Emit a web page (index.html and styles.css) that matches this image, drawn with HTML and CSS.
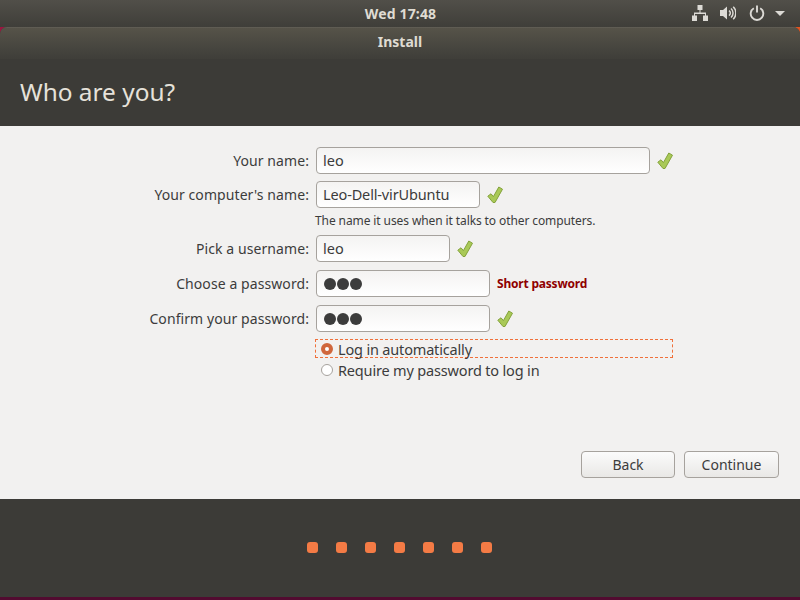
FILE: index.html
```html
<!DOCTYPE html>
<html lang="en">
<head>
<meta charset="utf-8">
<title>Install</title>
<link rel="stylesheet" href="styles.css">
</head>
<body>
<div class="screen">
  <header class="panel">
    <div class="clock">Wed 17:48</div>
    <div class="tray">
      <svg class="tray-icon net" viewBox="0 0 16 16" width="16" height="16"><path d="M5.500 0h5v5h-2v2.500h5.500v3h2V16h-5v-5.500h2V9H3v1.500h2V16H0v-5.500h2v-3h5.500V5h-2z" fill="#dcdad5"/></svg>
      <svg class="tray-icon vol" viewBox="0 0 16 16" width="16" height="16"><path d="M0 5h3l4-3.500v13L3 11H0z" fill="#dcdad5"/><path d="M9 5.500a3 3 0 0 1 0 5M11 3.500a6 6 0 0 1 0 9M13.200 1.800a8.500 8.500 0 0 1 0 12.400" fill="none" stroke="#dcdad5" stroke-width="1.500"/></svg>
      <svg class="tray-icon pow" viewBox="0 0 16 16" width="16" height="16"><path d="M4.800 3.200a6.300 6.300 0 1 0 6.400 0" fill="none" stroke="#dcdad5" stroke-width="1.900"/><path d="M8 .5v7" stroke="#dcdad5" stroke-width="1.900"/></svg>
      <span class="caret"></span>
    </div>
  </header>
  <main class="window">
    <div class="titlebar">Install</div>
    <div class="heading"><h1>Who are you?</h1></div>
    <div class="content">
      <form class="form">
        <div class="row row-first">
          <label class="label">Your name:</label>
          <div class="input w-name">leo</div>
          <svg class="check" viewBox="0 0 16 18" width="16" height="18"><use href="#tick"/></svg>
        </div>
        <div class="row row-computer">
          <label class="label">Your computer's name:</label>
          <div class="input w-computer">Leo-Dell-virUbuntu</div>
          <svg class="check" viewBox="0 0 16 18" width="16" height="18"><use href="#tick"/></svg>
        </div>
        <div class="hint">The name it uses when it talks to other computers.</div>
        <div class="row row-user">
          <label class="label">Pick a username:</label>
          <div class="input w-user">leo</div>
          <svg class="check" viewBox="0 0 16 18" width="16" height="18"><use href="#tick"/></svg>
        </div>
        <div class="row row-pass">
          <label class="label">Choose a password:</label>
          <div class="input w-pass dots"><i></i><i></i><i></i></div>
          <span class="short">Short password</span>
        </div>
        <div class="row row-pass">
          <label class="label">Confirm your password:</label>
          <div class="input w-pass dots"><i></i><i></i><i></i></div>
          <svg class="check" viewBox="0 0 16 18" width="16" height="18"><use href="#tick"/></svg>
        </div>
        <div class="radio-focus">
          <span class="radio on"></span><span>Log in automatically</span>
        </div>
        <div class="radio-row">
          <span class="radio"></span><span>Require my password to log in</span>
        </div>
      </form>
      <div class="actions">
        <button class="btn btn-back" type="button">Back</button>
        <button class="btn btn-cont" type="button">Continue</button>
      </div>
    </div>
    <div class="footer">
      <span class="dot"></span><span class="dot"></span><span class="dot"></span><span class="dot"></span><span class="dot"></span><span class="dot"></span><span class="dot"></span>
    </div>
  </main>
  <div class="desktop"></div>
</div>
<svg class="defs" width="0" height="0"><defs><symbol id="tick" viewBox="0 0 16 18"><path d="M.8 10.200 4 7.800l2.400 2.800L11.800 1l3.700 2.200L8 16.500H6z" fill="#a9c957" stroke="#84a23c" stroke-width="1" stroke-linejoin="round"/></symbol></defs></svg>
</body>
</html>
```
FILE: styles.css
```css
* { box-sizing: border-box; }
html, body { margin: 0; padding: 0; }
body { width: 800px; height: 600px; overflow: hidden; font-family: "Noto Sans", "Open Sans", sans-serif; font-size: 14px; color: #3c3c3c; }
.screen { width: 800px; height: 600px; display: flex; flex-direction: column; background: linear-gradient(90deg, #9b1540, #e2531f) no-repeat 0 27px / 100% 8px, #520b30; }
.panel { height: 27px; flex: none; position: relative; background: linear-gradient(#514f49, #3f3e39); display: flex; align-items: center; justify-content: center; }
.clock { color: #dfdbd2; font-size: 14px; font-weight: 700; letter-spacing: .15px; padding-left: 1px; }
.tray { position: absolute; right: 15px; top: 5px; display: flex; align-items: center; }
.tray-icon { display: block; }
.net { margin-right: 12px; }
.vol { margin-right: 13px; }
.pow { margin-right: 10px; }
.caret { width: 0; height: 0; border-left: 5px solid transparent; border-right: 5px solid transparent; border-top: 5px solid #dcdad5; }
.window { height: 570px; flex: none; display: flex; flex-direction: column; background: #3c3b37; border-radius: 7px 7px 0 0; overflow: hidden; }
.titlebar { height: 32px; flex: none; padding-top: 4px; text-align: center; color: #dfdbd2; font-size: 14px; font-weight: 700; background: linear-gradient(#565349, #45443e 70%, #3f3e39); border-top: 1px solid #5f5c53; }
.heading { height: 67px; flex: none; padding: 15px 0 0 20px; background: #3c3b37; }
h1 { margin: 0; font-size: 24.400px; line-height: 36px; font-weight: 400; color: #e6e2da; }
.content { height: 373px; flex: none; background: #f2f1f0; display: flex; flex-direction: column; justify-content: space-between; padding: 21px 21px 21px 0; }
.form { display: flex; flex-direction: column; }
.row { display: flex; align-items: center; height: 27px; }
.row-computer { margin-top: 7px; }
.row-user { margin-top: 6px; }
.row-pass { margin-top: 8px; }
.label { width: 309px; text-align: right; font-size: 14px; letter-spacing: .08px; line-height: 25px; }
.input { margin-left: 7px; height: 27px; padding: 0 6px; line-height: 24px; font-size: 14.500px; color: #3c3c3c; background: linear-gradient(#f4f3f2, #fff); border: 1px solid #a6a29d; border-radius: 4px; }
.w-name { width: 334px; }
.w-computer { width: 164px; letter-spacing: -.14px; white-space: nowrap; }
.w-user { width: 134px; }
.w-pass { width: 174px; }
.dots { display: flex; align-items: center; gap: 1px; padding-left: 7px; }
.dots i { width: 12px; height: 12px; border-radius: 50%; background: #3c3c3c; }
.check { margin-left: 7px; flex: none; }
.short { margin-left: 7px; color: #8f0000; font-size: 12px; font-weight: 700; letter-spacing: -.2px; }
.hint { margin: 4px 0 0 315px; font-size: 12px; line-height: 17px; letter-spacing: -.1px; }
.radio-focus { margin: 7px 0 0 315px; width: 358px; height: 19px; display: flex; align-items: center; border: 1px dashed #f0703a; }
.radio-row { margin: 2px 0 0 315px; height: 19px; display: flex; align-items: center; padding-left: 1px; }
.radio-focus, .radio-row { font-size: 14.500px; letter-spacing: -.17px; }
.radio { width: 12px; height: 12px; margin: 0 5px 0 5px; border-radius: 50%; background: #fff; border: 1px solid #a6a29d; flex: none; }
.radio.on { background: #fff; border: 4px solid #d0673c; }
.actions { display: flex; justify-content: flex-end; gap: 9px; }
.btn { height: 27px; width: 94px; padding: 0; font-family: inherit; font-size: 14px; color: #3c3c3c; background: linear-gradient(#fbfbfb, #e9e8e6); border: 1px solid #a6a29d; border-radius: 4px; }
.btn-cont { width: 95px; }
.footer { height: 98px; flex: none; display: flex; justify-content: center; align-items: center; gap: 18px; background: #3c3b37; padding: 0 1px 2px 0; }
.dot { width: 11px; height: 11px; border-radius: 3px; background: #f47b45; }
.desktop { flex: none; height: 3px; }
.defs { position: absolute; }
```
